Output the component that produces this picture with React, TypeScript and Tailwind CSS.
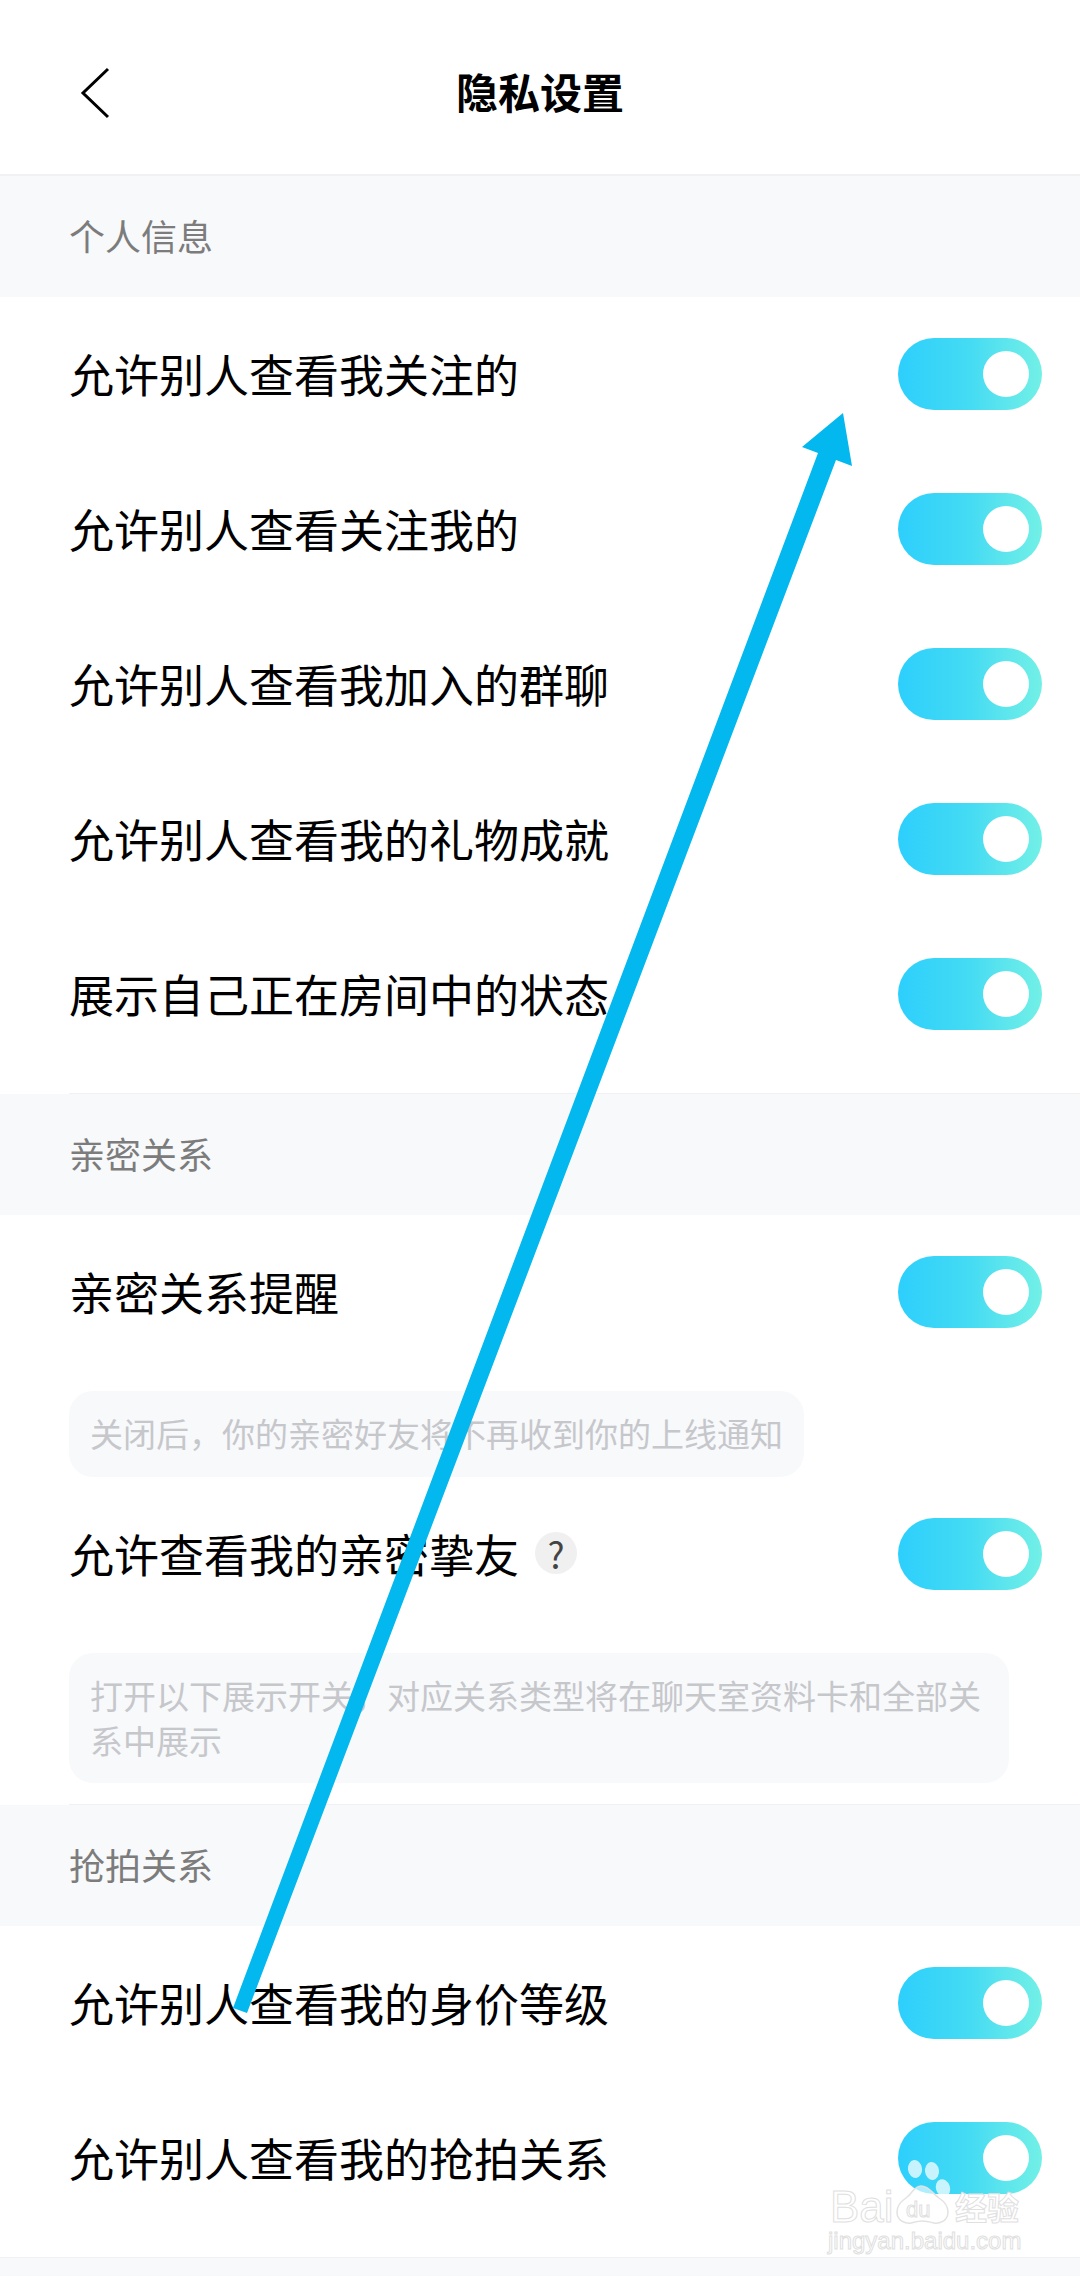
const font = { fontFamily: '"Noto Sans CJK SC", "Liberation Sans", sans-serif' }

function Toggle() {
  return (
    <div className="flex h-[72px] w-[144px] shrink-0 items-center justify-end rounded-full bg-gradient-to-r from-[#2ccffc] via-[#44dbf3] to-[#72f0e6] pr-[13px]">
      <div className="h-[46px] w-[46px] rounded-full bg-white" />
    </div>
  )
}

function Row({ label, help }: { label: string; help?: boolean }) {
  return (
    <div className="flex h-[155px] items-center justify-between pb-px pl-[69px] pr-[38px]">
      <div className="flex items-center pb-[2px]">
        <span className="text-[45px] leading-none text-black">{label}</span>
        {help && (
          <span className="ml-[16px] flex h-[42px] w-[42px] items-center justify-center rounded-full bg-[#f0f0f0] text-[36px] leading-none text-[#444]">
            ?
          </span>
        )}
      </div>
      <Toggle />
    </div>
  )
}

function SectionHead({ title }: { title: string }) {
  return (
    <div className="flex h-[121px] items-center bg-[#f8f9fb] pb-[3px] pl-[69px] text-[36px] leading-none text-[#7c7c7c]">
      {title}
    </div>
  )
}

function Note({ children, className }: { children: React.ReactNode; className: string }) {
  return (
    <div className={`ml-[69px] rounded-[24px] bg-[#f8f9fb] pl-[21px] pr-[20px] py-[20px] text-[33px] leading-[45px] text-[#c6c7cb] ${className}`}>
      {children}
    </div>
  )
}

function Arrow() {
  return (
    <svg className="pointer-events-none absolute left-0 top-0" width="1080" height="2276" viewBox="0 0 1080 2276">
      <polygon
        points="843,413 802,447 818,453 233,2008 247,2013 836,460 852,466"
        fill="#02b8ef"
      />
    </svg>
  )
}

function Watermark() {
  return (
    <div className="pointer-events-none absolute left-[826px] top-[2160px] h-[96px] w-[200px]">
      <svg className="absolute left-0 top-0" width="200" height="96" viewBox="0 0 200 96">
        <g fill="#ffffff" fillOpacity="0.72">
          <ellipse cx="89" cy="9" rx="7" ry="9" transform="rotate(-8 89 9)" />
          <ellipse cx="106" cy="11" rx="7" ry="9" transform="rotate(-8 106 11)" />
          <ellipse cx="117" cy="28" rx="7" ry="9" transform="rotate(-18 117 28)" />
          <ellipse cx="73" cy="23" rx="6" ry="8" transform="rotate(14 73 23)" />
        </g>
        <path
          d="M95 26c-7 0-9 8-15 12-6 4-9 9-9 14 0 8 7 12 14 11 4-1 7-2 11-2s8 1 12 2c7 1 14-3 14-11 0-5-3-10-9-14-6-4-10-12-18-12z"
          fill="#ffffff"
          fillOpacity="0.6"
          stroke="#e2e2e2"
          strokeWidth="1.5"
        />
      </svg>
      <span className="absolute left-[4px] top-[22px] text-[44px] leading-[50px] text-white [-webkit-text-stroke:1px_#e0e0e0] [font-family:'Liberation_Sans',sans-serif]">
        Bai
      </span>
      <span className="absolute left-[80px] top-[37px] text-[22px] leading-[26px] text-white [-webkit-text-stroke:1px_#e0e0e0] [font-family:'Liberation_Sans',sans-serif]">
        du
      </span>
      <span className="absolute left-[129px] top-[25px] text-[32px] font-bold leading-[42px] text-white [-webkit-text-stroke:1px_#e0e0e0]">
        经验
      </span>
      <span className="absolute left-[2px] top-[68px] whitespace-nowrap text-[24px] leading-[26px] text-white [-webkit-text-stroke:1px_#e0e0e0] [font-family:'Liberation_Sans',sans-serif]">
        jingyan.baidu.com
      </span>
    </div>
  )
}

export default function App() {
  return (
    <div className="relative h-[2276px] w-[1080px] overflow-hidden bg-[#f8f9fb]" style={font}>
      {/* Header */}
      <header className="relative flex h-[176px] items-center justify-center border-b-2 border-[#f1f1f3] bg-white">
        <svg className="absolute left-[78px] top-[66px]" width="34" height="54" viewBox="0 0 34 54">
          <path d="M30 3 L5 27 L30 51" fill="none" stroke="#000" strokeWidth="3" />
        </svg>
        <h1 className="mt-[8px] text-[42px] font-bold leading-none text-black">隐私设置</h1>
      </header>

      <SectionHead title="个人信息" />
      <section className="bg-white pb-[21px]">
        <Row label="允许别人查看我关注的" />
        <Row label="允许别人查看关注我的" />
        <Row label="允许别人查看我加入的群聊" />
        <Row label="允许别人查看我的礼物成就" />
        <Row label="展示自己正在房间中的状态" />
      </section>
      <div className="bg-white pl-[69px]">
        <div className="h-px bg-[#f1f1f3]" />
      </div>

      <SectionHead title="亲密关系" />
      <section className="bg-white pb-[21px]">
        <Row label="亲密关系提醒" />
        <Note className="mt-[21px] h-[86px] w-[735px] whitespace-nowrap">关闭后，你的亲密好友将不再收到你的上线通知</Note>
        <Row label="允许查看我的亲密挚友" help />
        <Note className="mt-[21px] h-[130px] w-[940px]">打开以下展示开关，对应关系类型将在聊天室资料卡和全部关系中展示</Note>
      </section>
      <div className="bg-white pl-[69px]">
        <div className="h-px bg-[#f1f1f3]" />
      </div>

      <SectionHead title="抢拍关系" />
      <section className="border-b border-[#f1f1f3] bg-white pb-[21px]">
        <Row label="允许别人查看我的身价等级" />
        <Row label="允许别人查看我的抢拍关系" />
      </section>

      <Arrow />
      <Watermark />
    </div>
  )
}
